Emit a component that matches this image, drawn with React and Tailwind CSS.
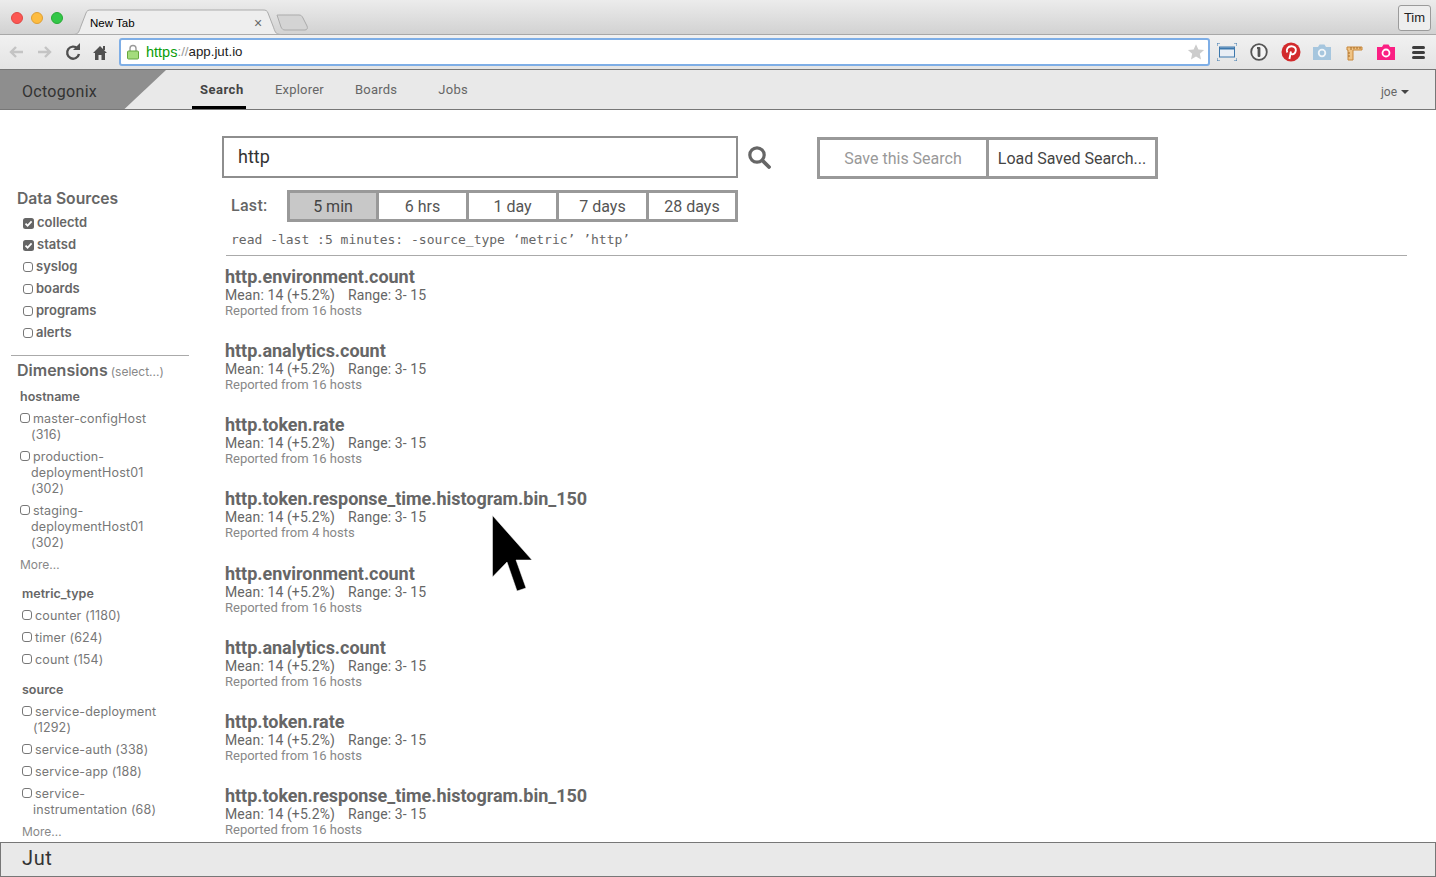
import React from "react";

const times = [
  { label: "5 min", cls: "w-[89px] bg-[#c8c8c8] text-[#444] border-r-[3px] border-[#999]" },
  { label: "6 hrs", cls: "w-[90px] text-[#555] border-r-[3px] border-[#999]" },
  { label: "1 day", cls: "w-[90px] text-[#555] border-r-[3px] border-[#999]" },
  { label: "7 days", cls: "w-[90px] text-[#555] border-r-[3px] border-[#999]" },
  { label: "28 days", cls: "w-[86px] text-[#555]" },
];
const sources = [
  { name: "collectd", on: true },
  { name: "statsd", on: true },
  { name: "syslog" },
  { name: "boards" },
  { name: "programs" },
  { name: "alerts" },
];
const results = [
  ["http.environment.count", 16],
  ["http.analytics.count", 16],
  ["http.token.rate", 16],
  ["http.token.response_time.histogram.bin_150", 4],
  ["http.environment.count", 16],
  ["http.analytics.count", 16],
  ["http.token.rate", 16],
  ["http.token.response_time.histogram.bin_150", 16],
];

const Box = ({ on }) =>
  on ? (
    <svg width="11" height="11" viewBox="0 0 11 11" className="inline-block shrink-0 mr-[3px] align-[-1px]">
      <rect width="11" height="11" rx="2.5" fill="#666" />
      <path d="M2.5 5.6 4.6 7.7 8.6 3.4" fill="none" stroke="#fff" strokeWidth="1.7" />
    </svg>
  ) : (
    <span className="inline-block w-[10px] h-[10px] mr-[3px] rounded-[3px] border border-[#777] align-[0px]" />
  );

const Item = ({ children, indent }) => (
  <div className={`text-[12.5px] leading-4 text-[#777] tracking-[0.15px] mb-[6px] ${indent}`}>
    <Box />
    {children}
  </div>
);

const Chrome = () => (
  <div className="h-[69px] shrink-0 font-['Liberation_Sans',sans-serif]">
    <div className="h-[35px] flex items-end relative bg-gradient-to-b from-[#ececec] to-[#d2d2d2] border-b border-[#a8a8a8]">
      <div className="flex gap-2 absolute left-[11px] top-[12px]">
        <span className="w-3 h-3 rounded-full bg-[#fc5753] border border-[#df4744]" />
        <span className="w-3 h-3 rounded-full bg-[#fdbc40] border border-[#de9f34]" />
        <span className="w-3 h-3 rounded-full bg-[#33c748] border border-[#27aa35]" />
      </div>
      <svg width="240" height="26" viewBox="0 0 240 26" className="absolute left-[73px] top-[9px]">
        <path d="M0 25.5C6 25.5 6 22 8 17L13 4C14 1.5 15 1 18 1H190C193 1 194 1.5 195 4L200 17C202 22 202 25.5 208 25.5Z" fill="#eeeeee" stroke="#ababab" />
        <path d="M204 6C204 6 205 6 206 6H226C228 6 229 7 230 9L234 17C235 19 234 21 232 21H212C210 21 209 20 208 18Z" fill="#d4d4d4" stroke="#ababab" />
      </svg>
      <span className="absolute left-[90px] top-[16px] text-[11.5px] leading-[14px] text-black">New Tab</span>
      <span className="absolute left-[254px] top-[15px] text-[14px] leading-4 text-[#666]">×</span>
      <button className="absolute right-[5px] top-[5px] w-[33px] h-[26px] rounded-[3px] border border-[#9b9b9b] bg-[#eeeeee] text-[13px] text-[#222]">Tim</button>
    </div>
    <div className="h-[34px] flex items-center bg-gradient-to-b from-[#f1f1f1] to-[#e4e4e4] relative">
      <svg width="100" height="20" viewBox="0 0 100 20" className="ml-[8px] shrink-0">
        <path d="M15 10H3M8 5 3 10l5 5" fill="none" stroke="#c4c4c4" strokeWidth="2.4" />
        <path d="M30 10h12M37 5l5 5-5 5" fill="none" stroke="#c4c4c4" strokeWidth="2.4" />
        <path d="M69.5 6.5A6 6 0 1 0 71 12" fill="none" stroke="#4f4f4f" strokeWidth="2.4" />
        <path d="M65 8h7V1Z" fill="#4f4f4f" />
        <path d="M85 11 92 4l7 7h-2v7h-3.5v-5h-3v5H87v-7Z" fill="#4f4f4f" />
        <rect x="95" y="4" width="2" height="4" fill="#4f4f4f" />
      </svg>
      <div className="ml-[11px] w-[1091px] h-[28px] flex items-center rounded-[3px] border-2 border-[#7eaee6] bg-white shrink-0 pl-[5px] pr-[3px]">
        <svg width="14" height="16" viewBox="0 0 14 16" className="shrink-0">
          <path d="M4 7V4.5a3 3 0 0 1 6 0V7" fill="none" stroke="#999" strokeWidth="1.4" />
          <rect x="1.5" y="7" width="11" height="8" rx="1" fill="#a4dc7c" stroke="#65a83e" />
        </svg>
        <span className="ml-[6px] text-[14.5px] leading-4 text-[#0a9d0a]">https</span>
        <span className="text-[13.3px] leading-4 text-[#999]">://</span>
        <span className="text-[13.3px] leading-4 text-[#222]">app.jut.io</span>
        <svg width="18" height="18" viewBox="0 0 24 24" className="ml-auto shrink-0">
          <path d="m12 1.5 3.2 7 7.6.8-5.7 5.1 1.6 7.5L12 18.1l-6.7 3.8 1.6-7.5L1.2 9.3l7.6-.8Z" fill="#cccccc" />
        </svg>
      </div>
      <div className="flex items-center ml-[7px] gap-[11.8px]">
        <svg width="20" height="18" viewBox="0 0 20 18">
          <rect x="2.5" y="4" width="15" height="10" fill="#e9eef5" stroke="#3d78ad" />
          <rect x="3" y="4.5" width="14" height="2" fill="#3d78ad" />
          <path d="M0 3V0h3M17 0h3v3M20 15v3h-3M3 18H0v-3" fill="none" stroke="#3d78ad" />
        </svg>
        <svg width="20" height="20" viewBox="0 0 20 20">
          <circle cx="10" cy="10" r="7.8" fill="#f4f4f4" stroke="#555" strokeWidth="1.8" />
          <rect x="8.6" y="5" width="2.8" height="10" rx="1" fill="#555" />
          <rect x="8" y="5" width="2" height="2" fill="#555" />
        </svg>
        <svg width="20" height="20" viewBox="0 0 20 20">
          <circle cx="10" cy="10" r="9.5" fill="#d22a2c" />
          <path d="M8.4 17 10 9.5M6.3 10.5C4.6 7.5 7 4.2 10.4 4.2c3 0 4.8 2 4.4 4.5-.4 2.6-2.2 4-4 3.4-1-.3-1.4-1-1.4-1.6" fill="none" stroke="#fff" strokeWidth="1.9" />
        </svg>
        <svg width="20" height="18" viewBox="0 0 20 18">
          <path d="M1 4h5l1.5-2.5h5L14 4h5v13H1Z" fill="#a6c6de" />
          <circle cx="10" cy="10" r="4.2" fill="#f2f6f9" />
          <circle cx="10" cy="10" r="2.4" fill="#a6c6de" />
        </svg>
        <svg width="20" height="20" viewBox="0 0 20 20">
          <path d="M3 5h15v3H9v10H4V8H3Z" fill="#efc384" stroke="#c8873a" />
          <path d="M7 5v3M10 5v2M13 5v2M16 5v2M4 11h2M4 14h2" stroke="#a66a26" />
        </svg>
        <svg width="20" height="18" viewBox="0 0 20 18">
          <path d="M1 4h5l1.5-2.5h5L14 4h5v13H1Z" fill="#fb1f83" />
          <circle cx="10" cy="10" r="4.4" fill="#fff" />
          <circle cx="10" cy="10" r="2.6" fill="#fb1f83" />
        </svg>
        <span className="flex flex-col gap-[2px] w-[13px] ml-[4px]">
          <span className="h-[3px] rounded-sm bg-[#3d3d3d]" />
          <span className="h-[3px] rounded-sm bg-[#3d3d3d]" />
          <span className="h-[3px] rounded-sm bg-[#3d3d3d]" />
        </span>
      </div>
    </div>
  </div>
);

const Nav = () => (
  <div className="h-[41px] shrink-0 flex bg-[#e9e9e9] border border-t-[#777] border-b-[#777] border-l-0 border-r-[#777] font-['Roboto',sans-serif]">
    <div className="w-[166px] pl-[22px] pt-[12px] bg-[#8e8e8e] [clip-path:polygon(0_0,100%_0,75%_100%,0_100%)] text-[16px] leading-5 tracking-[0.3px] text-[#333]">Octogonix</div>
    <a className="ml-[26px] w-[54px] pl-[8px] h-[39px] pt-[12px] text-[13px] leading-4 font-bold tracking-[0.5px] text-[#444] border-b-[3px] border-black">Search</a>
    <a className="ml-[29px] pt-[12px] text-[13px] leading-4 tracking-[0.2px] text-[#666]">Explorer</a>
    <a className="ml-[31px] pt-[12px] text-[13px] leading-4 tracking-[0.25px] text-[#666]">Boards</a>
    <a className="ml-[41px] pt-[12px] text-[13px] leading-4 tracking-[0.25px] text-[#666]">Jobs</a>
    <span className="ml-auto mr-[26px] pt-[14px] text-[12px] leading-4 text-[#666] flex items-start">
      joe
      <span className="ml-[4px] mt-[6px] w-0 h-0 border-x-4 border-x-transparent border-t-4 border-t-[#444]" />
    </span>
  </div>
);

const Sidebar = () => (
  <aside className="w-[222px] shrink-0 pl-[11px] pt-[79px] overflow-hidden font-['Inter',sans-serif]">
    <h3 className="pl-[6px] text-[15.7px] leading-5 font-semibold text-[#666]">Data Sources</h3>
    <div className="pl-[12px] pt-[3px]">
      {sources.map((s) => (
        <div key={s.name} className="h-[22px] flex items-center text-[13px] font-semibold text-[#666]">
          <Box on={s.on} />
          {s.name}
        </div>
      ))}
    </div>
    <div className="w-[178px] mt-[11px] border-t border-[#aaa]" />
    <div className="pl-[6px] pt-[4px] leading-5 text-[#666]">
      <span className="text-[16px] font-semibold">Dimensions</span>
      <span className="ml-[3px] text-[12px] text-[#888]">(select...)</span>
    </div>
    <h4 className="pl-[9px] pt-[6px] pb-[5px] text-[12.5px] leading-4 font-semibold text-[#666] mt-[1px]">hostname</h4>
    <div className="pl-[9px] pt-[1px]">
      <Item indent="pl-[11px] -indent-[11px] w-[140px]">master-configHost (316)</Item>
      <Item indent="pl-[11px] -indent-[11px] w-[140px]">production-deploymentHost01 (302)</Item>
      <Item indent="pl-[11px] -indent-[11px] w-[140px]">staging-deploymentHost01 (302)</Item>
      <div className="text-[12px] leading-4 text-[#888]">More…</div>
    </div>
    <h4 className="pl-[11px] pt-[13px] pb-[6px] text-[12.5px] leading-4 font-semibold text-[#666]">metric_type</h4>
    <div className="pl-[11px]">
      <Item>counter (1180)</Item>
      <Item>timer (624)</Item>
      <Item>count (154)</Item>
    </div>
    <h4 className="pl-[11px] pt-[8px] pb-[6px] text-[12.5px] leading-4 font-semibold text-[#666]">source</h4>
    <div className="pl-[11px]">
      <Item indent="pl-[11px] -indent-[11px] w-[145px]">service-deployment (1292)</Item>
      <Item>service-auth (338)</Item>
      <Item>service-app (188)</Item>
      <Item indent="pl-[11px] -indent-[11px] w-[145px]">service-instrumentation (68)</Item>
      <div className="text-[12px] leading-4 text-[#888]">More…</div>
    </div>
  </aside>
);

const Main = () => (
  <main className="flex-1 overflow-hidden pt-[26px] font-['Roboto',sans-serif]">
    <div className="flex items-start">
      <div className="w-[516px] h-[42px] pl-[14px] border-2 border-[#8e8e8e] text-[18px] leading-[38px] text-[#333]">http</div>
      <svg width="24" height="24" viewBox="0 0 24 24" className="ml-[9px] mt-[9px]">
        <circle cx="10" cy="10" r="7.2" fill="none" stroke="#666" strokeWidth="3.2" />
        <path d="m15.5 15.5 6.5 6.5" stroke="#666" strokeWidth="3.8" strokeLinecap="round" />
      </svg>
      <div className="ml-[46px] mt-[1px] flex h-[42px] border-[3px] border-[#999] text-[16px] leading-[38px]">
        <button className="w-[169px] text-center text-[#999] border-r-[3px] border-[#999]">Save this Search</button>
        <button className="w-[166px] text-center text-[#444]">Load Saved Search...</button>
      </div>
    </div>
    <div className="flex items-center mt-[11px] ml-[9px]">
      <span className="w-[56px] text-[16px] font-medium tracking-[0.3px] text-[#666]">Last:</span>
      <div className="flex h-[32px] border-[3px] border-[#999]">
        {times.map((t) => (
          <span key={t.label} className={`text-[16px] leading-[28px] text-center ${t.cls}`}>
            {t.label}
          </span>
        ))}
      </div>
    </div>
    <div className="mt-[10px] ml-[9px] text-[13px] leading-4 text-[#666] font-['DejaVu_Sans_Mono',monospace]">read -last :5 minutes: -source_type ‘metric’ ’http’</div>
    <div className="mt-[7px] ml-[4px] w-[1181px] border-t border-[#aaa]" />
    <div className="ml-[3px] pt-[10px]">
      {results.map(([name, hosts], i) => (
        <div key={i} className="h-[74.14px]">
          <div className="text-[18px] leading-[22px] font-bold tracking-[-0.03px] text-[#666]">{name}</div>
          <div className="text-[14px] leading-[15px] tracking-[0.1px] text-[#666]">
            Mean: 14 (+5.2%)
            <span className="ml-[13px]">Range: 3- 15</span>
          </div>
          <div className="text-[13px] leading-4 text-[#888]">Reported from {hosts} hosts</div>
        </div>
      ))}
    </div>
  </main>
);

export default function App() {
  return (
    <div className="relative w-[1436px] h-[877px] overflow-hidden flex flex-col bg-white">
      <Chrome />
      <Nav />
      <div className="flex flex-1 min-h-0">
        <Sidebar />
        <Main />
      </div>
      <div className="h-[35px] shrink-0 pl-[21px] bg-[#e9e9e9] border border-[#777] text-[20px] leading-[30px] tracking-[0.6px] text-[#333] font-['Roboto',sans-serif]">Jut</div>
      <svg width="42" height="78" viewBox="0 0 42 78" className="absolute left-[491px] top-[514px]">
        <path d="M1.5 1.5V63L16 48l10 29 9-3-10-28h16Z" fill="#000" stroke="#fff" strokeWidth="0.5" />
      </svg>
    </div>
  );
}
